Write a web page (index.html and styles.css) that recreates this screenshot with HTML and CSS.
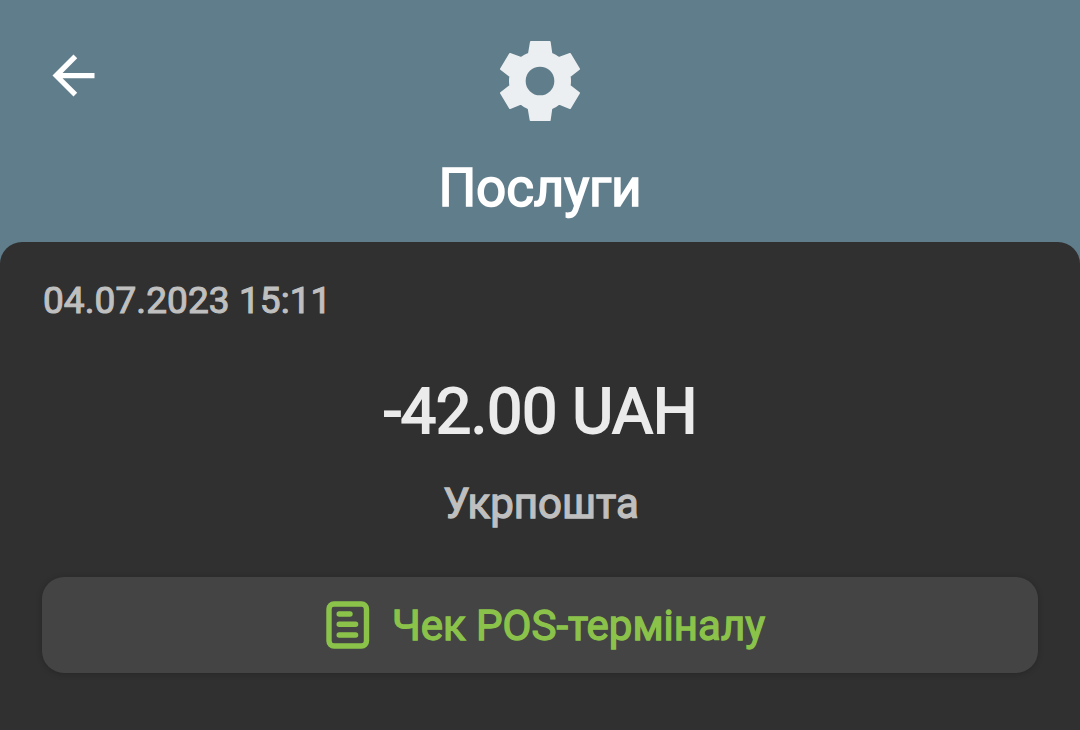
FILE: index.html
```html
<!DOCTYPE html>
<html lang="uk">

<head>
    <meta charset="UTF-8">
    <meta name="viewport" content="width=device-width, initial-scale=1.0">
    <title>Послуги</title>
    <link rel="stylesheet" href="styles.css">
</head>

<body>
    <!-- Header -->
    <header class="header">
        <button class="back" aria-label="Назад">
            <svg width="63" height="63" viewBox="0 0 24 24"><path d="M20 11H7.83l5.59-5.59L12 4l-8 8 8 8 1.41-1.41L7.83 13H20v-2z"/></svg>
        </button>
        <div class="category">
            <svg class="gear" width="100" height="100" viewBox="0 0 300 300">
                <path fill-rule="evenodd" d="M123 36H179L184 71Q196 76 207 84L240 72L267 117L239 139Q241 153 239 167L267 189L240 234L207 221Q196 230 184 235L179 270H122L116 235Q104 230 93 221L60 234L33 189L61 167Q59 153 61 139L33 117L60 72L93 84Q104 76 117 71zM150 107a46 46 0 1 0 0 92a46 46 0 1 0 0-92z"/>
            </svg>
            <h1>Послуги</h1>
        </div>
    </header>

    <!-- Transaction details -->
    <main class="details">
        <time class="date">04.07.2023 15:11</time>
        <div class="amount">-42.00 UAH</div>
        <div class="merchant">Укрпошта</div>
        <button class="receipt">
            <svg width="44" height="48" viewBox="0 0 44 48">
                <rect x="3" y="3" width="37.5" height="42" rx="5"/>
                <path d="M13.2 13H24M13.2 23.3h16.4M13.2 34h16.4"/>
            </svg>
            <span>Чек POS-терміналу</span>
        </button>
    </main>
</body>

</html>
```
FILE: styles.css
```css
* {
    box-sizing: border-box;
}

body {
    margin: 0;
    min-height: 100vh;
    display: flex;
    flex-direction: column;
    font-family: Roboto, sans-serif;
    background-color: #607d8b;
}

button {
    border: none;
    font-family: inherit;
    cursor: pointer;
}

.header {
    display: grid;
    grid-template-columns: 126px 1fr 126px;
    height: 242px;
}

.back {
    align-self: start;
    margin: 44px 0 0 42px;
    padding: 0;
    width: 63px;
    height: 63px;
    background: none;
    fill: #fff;
}

.category {
    display: flex;
    flex-direction: column;
    align-items: center;
    padding-top: 30px;
}

.gear {
    fill: #eceff1;
    stroke: #eceff1;
    stroke-width: 6;
    stroke-linejoin: round;
}

h1 {
    margin: 26px 0 0;
    font-size: 53px;
    line-height: 64px;
    font-weight: 400;
    letter-spacing: -0.2px;
    color: #fff;
    -webkit-text-stroke: 1.6px;
}

.details {
    flex: 1;
    display: flex;
    flex-direction: column;
    padding: 36px 42px 0;
    border-radius: 22px 22px 0 0;
    background-color: #303030;
    text-align: center;
}

.date {
    padding-left: 1px;
    text-align: left;
    font-size: 37px;
    line-height: 46px;
    letter-spacing: 0.08px;
    color: #bfbfbf;
    -webkit-text-stroke: 1.1px;
}

.amount {
    margin-top: 48px;
    padding-left: 1px;
    font-size: 63px;
    line-height: 80px;
    letter-spacing: -0.4px;
    color: #ebebeb;
    -webkit-text-stroke: 1.8px;
}

.merchant {
    margin-top: 26px;
    padding-left: 2px;
    font-size: 42px;
    line-height: 52px;
    color: #bfbfbf;
    -webkit-text-stroke: 1.3px;
}

.receipt {
    display: flex;
    justify-content: center;
    align-items: center;
    gap: 22px;
    height: 96px;
    margin-top: 47px;
    padding: 0 0 0 11px;
    border-radius: 22px;
    background-color: #444;
    box-shadow: 0 1px 6px rgba(0, 0, 0, 0.2);
    font-size: 42px;
    color: #8bc34a;
    -webkit-text-stroke: 1.3px;
}

.receipt svg {
    fill: none;
    stroke: #8bc34a;
    stroke-width: 5.4;
    stroke-linecap: round;
}
```
